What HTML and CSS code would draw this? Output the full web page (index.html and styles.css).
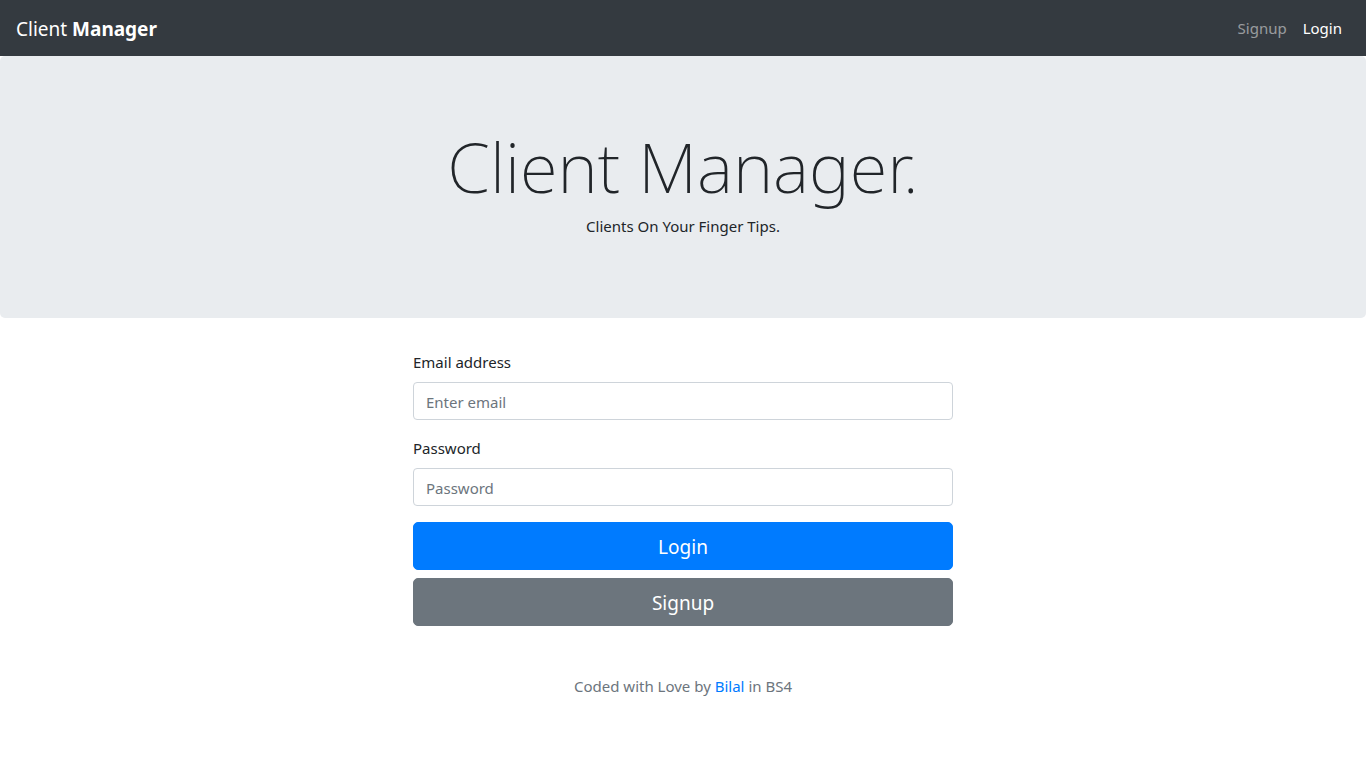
FILE: index.html
```html
<!DOCTYPE html>
<html lang="en">
<head>
<meta charset="utf-8">
<meta name="viewport" content="width=device-width, initial-scale=1">
<title>Client Manager</title>
<link rel="stylesheet" href="styles.css">
</head>
<body>
<nav class="navbar">
  <a class="brand" href="#">Client <strong>Manager</strong></a>
  <div class="nav-links">
    <a class="nav-link" href="#signup">Signup</a>
    <a class="nav-link active" href="#login">Login</a>
  </div>
</nav>
<header class="hero">
  <h1 class="hero-title">Client Manager.</h1>
  <p class="hero-text">Clients On Your Finger Tips.</p>
</header>
<main class="container">
  <form class="login-form">
    <div class="field">
      <label for="email">Email address</label>
      <input class="control" id="email" type="email" placeholder="Enter email">
    </div>
    <div class="field">
      <label for="password">Password</label>
      <input class="control" id="password" type="password" placeholder="Password">
    </div>
    <button class="btn btn-primary" type="submit">Login</button>
    <button class="btn btn-secondary" type="button">Signup</button>
  </form>
</main>
<footer class="footer">Coded with Love by <a href="#bilal">Bilal</a> in BS4</footer>
</body>
</html>
```
FILE: styles.css
```css
*, *::before, *::after { box-sizing: border-box; }

body {
  margin: 0;
  font-family: "Segoe UI", "Noto Sans", "Open Sans", sans-serif;
  font-size: 15px;
  line-height: 24px;
  color: #212529;
  background: #fff;
}

a { color: #007bff; text-decoration: none; }

.navbar {
  display: flex;
  align-items: center;
  justify-content: space-between;
  padding: 8px 16px;
  background: #343a40;
}

.brand {
  padding: 6px 0 4px;
  font-size: 19px;
  line-height: 30px;
  color: #fff;
}

.brand strong { font-weight: 700; }

.nav-links { display: flex; }

.nav-link {
  padding: 8px;
  color: rgba(255, 255, 255, .5);
}

.nav-link.active { color: #fff; }

.hero {
  padding: 64px 32px;
  margin-bottom: 32px;
  text-align: center;
  background: #e9ecef;
  border-radius: 5px;
}

.hero-title {
  margin: 0 0 2px;
  font-size: 69px;
  font-weight: 200;
  line-height: 92px;
}

.hero-text { margin: 0 0 16px; }

.container {
  width: 100%;
  max-width: 570px;
  margin: 0 auto;
  padding: 0 15px;
}

.field { margin-bottom: 16px; }

.field label {
  display: inline-block;
  margin-bottom: 8px;
}

.control {
  display: block;
  width: 100%;
  height: 38px;
  padding: 7px 12px 5px;
  font: inherit;
  color: #495057;
  border: 1px solid #ced4da;
  border-radius: 4px;
}

.control::placeholder { color: #6c757d; opacity: 1; }

.btn {
  display: block;
  width: 100%;
  padding: 9px 16px 7px;
  font-family: inherit;
  font-size: 19px;
  line-height: 30px;
  color: #fff;
  border: 1px solid transparent;
  border-radius: 5px;
}

.btn + .btn { margin-top: 8px; }
.btn-primary { background: #007bff; border-color: #007bff; }
.btn-secondary { background: #6c757d; border-color: #6c757d; }

.footer {
  padding: 48px 16px;
  text-align: center;
  color: #6c757d;
}
```
